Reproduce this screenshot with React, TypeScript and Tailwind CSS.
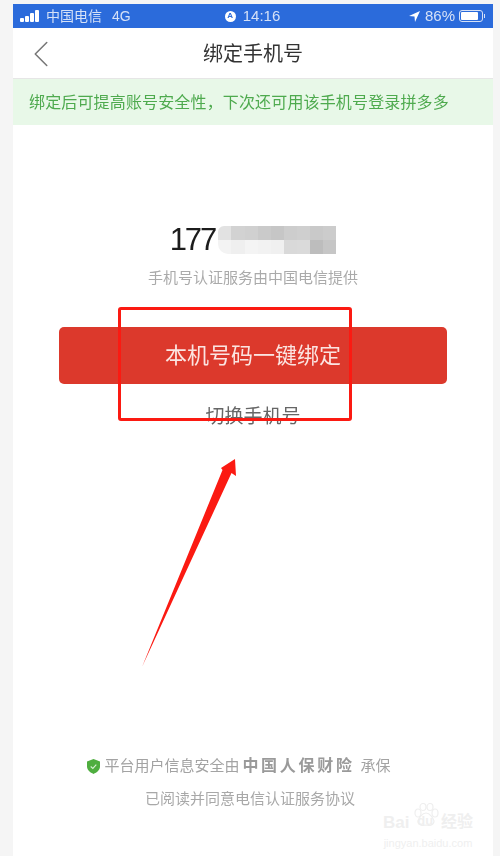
import { ChevronLeft } from 'lucide-react';

const FONT = "font-['Liberation_Sans','Noto_Sans_CJK_SC',sans-serif]";

const MOSAIC_TOP = ['#e2e2e2', '#d2d2d2', '#d0d0d0', '#cacaca', '#c6c6c6', '#cdcdcd', '#cfcfcf', '#c9c9c9', '#cccccc'];
const MOSAIC_BOTTOM = ['#f3f3f3', '#efefef', '#f4f4f4', '#f2f2f2', '#f0f0f0', '#d9d9d9', '#dadada', '#bdbdbd', '#c6c6c6'];

function StatusBar() {
  return (
    <div className="flex h-[24px] items-center justify-between bg-[#2b6bdb] pl-[7px] pr-[8px] text-[14px] text-[#d5e1f7]">
      <div className="flex w-[150px] items-center">
        <div className="mr-[7px] flex items-end gap-[1px]">
          <span className="h-[4px] w-[4px] rounded-[1px] bg-white" />
          <span className="h-[6px] w-[4px] rounded-[1px] bg-white" />
          <span className="h-[9px] w-[4px] rounded-[1px] bg-white" />
          <span className="h-[12px] w-[4px] rounded-[1px] bg-white" />
        </div>
        <span>中国电信</span>
        <span className="ml-[10px]">4G</span>
      </div>
      <div className="flex items-center gap-[7px]">
        <span className="flex h-[11px] w-[11px] items-center justify-center rounded-full bg-white text-[8px] font-bold leading-none text-[#2b6bdb]">A</span>
        <span className="text-[15px]">14:16</span>
      </div>
      <div className="flex w-[150px] items-center justify-end">
        <svg width="11" height="11" viewBox="0 0 11 11" className="mr-[5px]">
          <path d="M11 0 L0 5 L5.5 5.5 L6 11 Z" fill="#ffffff" />
        </svg>
        <span className="text-[15px]">86%</span>
        <div className="ml-[4px] flex h-[12px] w-[24px] items-center rounded-[3px] border border-[#d5e1f7] p-[1px]">
          <div className="h-full w-[85%] rounded-[1px] bg-white" />
        </div>
        <span className="ml-px h-[4px] w-px bg-[#d5e1f7]" />
      </div>
    </div>
  );
}

function PhoneNumber() {
  return (
    <div className="flex h-[29px] items-center justify-center">
      <span className="text-[31px] leading-none tracking-[-2px] text-[#1c1c1c]">177</span>
      <div className="ml-[3px] flex w-[118px] flex-col overflow-hidden rounded-tl-[6px] rounded-bl-[10px]">
        <div className="flex h-[14px]">
          {MOSAIC_TOP.map((c, i) => (
            <div key={i} className="flex-1" style={{ backgroundColor: c }} />
          ))}
        </div>
        <div className="flex h-[14px]">
          {MOSAIC_BOTTOM.map((c, i) => (
            <div key={i} className="flex-1" style={{ backgroundColor: c }} />
          ))}
        </div>
      </div>
    </div>
  );
}

export default function App() {
  return (
    <div className={`relative h-[856px] w-[500px] overflow-hidden bg-[#f5f5f5] pl-[13px] pr-[7px] pt-[4px] ${FONT}`}>
      <div className="flex h-full flex-col bg-white blur-[0.4px]">
        <StatusBar />
        <div className="relative flex h-[51px] items-center justify-center border-b border-[#e6e6e6] pt-[2px]">
          <ChevronLeft className="absolute left-[5px] top-[3px] h-[46px] w-[46px] text-[#777777]" strokeWidth={0.8} />
          <span className="text-[20px] text-[#333333]">绑定手机号</span>
        </div>
        <div className="flex h-[46px] items-center bg-[#e8f8e8] pl-[16px] pt-[2px] text-[16px] tracking-[0.15px] text-[#4eaa4e]">
          绑定后可提高账号安全性，下次还可用该手机号登录拼多多
        </div>
        <div className="flex flex-1 flex-col items-center pt-[100px]">
          <PhoneNumber />
          <p className="mt-[14px] text-[15px] leading-[20px] text-[#aaaaaa]">手机号认证服务由中国电信提供</p>
          <button className="mt-[39px] flex h-[57px] w-[388px] items-center justify-center rounded-[5px] bg-[#dc392c] text-[22px] text-[#fbe4e1]">
            本机号码一键绑定
          </button>
          <span className="mt-[20px] text-[19px] leading-[26px] text-[#666666]">切换手机号</span>
          <div className="mr-[28px] mt-auto flex items-center text-[15px] leading-[22px] text-[#a3a3a3]">
            <svg width="13" height="15" viewBox="0 0 14 16" className="mr-[4px]">
              <path d="M7 0 L14 2.5 V8 C14 12 10.5 14.5 7 16 C3.5 14.5 0 12 0 8 V2.5 Z" fill="#4fae3f" />
              <path d="M4 8 L6.3 10 L10 6" fill="none" stroke="#d8f0d2" strokeWidth="1.2" />
            </svg>
            <span>平台用户信息安全由</span>
            <span className="ml-[3px] text-[16px] font-bold tracking-[2.7px] text-[#9a9a9a]">中国人保财险</span>
            <span className="ml-[6px]">承保</span>
          </div>
          <p className="mb-[46px] mr-[6px] mt-[11px] text-[15px] leading-[22px] text-[#a8a8a8]">已阅读并同意电信认证服务协议</p>
        </div>
      </div>

      {/* annotations painted over the screenshot */}
      <div className="absolute left-[118px] top-[307px] h-[114px] w-[234px] rounded-[3px] border-[3px] border-[#fb1a12]" />
      <svg width="500" height="856" className="absolute left-0 top-0">
        <path d="M142 667 L222.5 470 L221 468 L235 459 L236 476 L231.5 473 Z" fill="#fb1a12" />
      </svg>

      {/* watermark */}
      <div className="absolute left-[383px] top-[803px] flex w-[90px] flex-col items-center leading-none text-[#efefef]">
        <svg width="26" height="24" viewBox="0 0 26 24" className="absolute left-[30px] top-0" fill="none" stroke="#efefef" strokeWidth="1.2">
          <ellipse cx="5" cy="10" rx="3" ry="4" />
          <ellipse cx="10" cy="4" rx="3" ry="3.5" />
          <ellipse cx="17" cy="4" rx="3" ry="3.5" />
          <ellipse cx="22" cy="10" rx="3" ry="4" />
          <path d="M13 10 C9 10 6 15 5 18 C5 22 9 23 13 22 C17 23 21 22 21 18 C20 15 17 10 13 10 Z" />
        </svg>
        <div className="mt-[11px] flex w-full justify-between text-[17px] font-bold">
          <span>Bai</span>
          <span className="text-[13px]">du</span>
          <span className="text-[16px]">经验</span>
        </div>
        <span className="mt-[7px] whitespace-nowrap text-[11px]">jingyan.baidu.com</span>
      </div>
    </div>
  );
}
